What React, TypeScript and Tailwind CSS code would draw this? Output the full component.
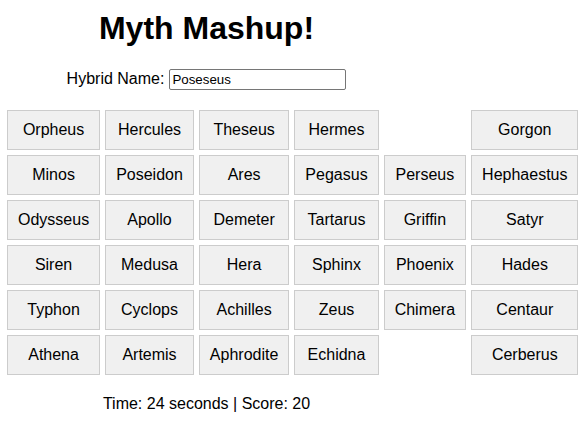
const grid: (string | null)[][] = [
  ["Orpheus", "Hercules", "Theseus", "Hermes", null, "Gorgon"],
  ["Minos", "Poseidon", "Ares", "Pegasus", "Perseus", "Hephaestus"],
  ["Odysseus", "Apollo", "Demeter", "Tartarus", "Griffin", "Satyr"],
  ["Siren", "Medusa", "Hera", "Sphinx", "Phoenix", "Hades"],
  ["Typhon", "Cyclops", "Achilles", "Zeus", "Chimera", "Centaur"],
  ["Athena", "Artemis", "Aphrodite", "Echidna", null, "Cerberus"],
];

export default function App() {
  return (
    <div className="min-h-[448px] bg-white text-black font-['Liberation_Sans',Arial,sans-serif]">
      <div className="w-[413px] pt-[10px] text-center">
        <h1 className="text-[32px] leading-[37px] font-bold">Myth Mashup!</h1>

        <div className="mt-[22px] flex items-start justify-center">
          <label htmlFor="hybrid" className="mt-[1px] text-[16px] leading-[18px]">
            Hybrid Name:
          </label>
          <input
            id="hybrid"
            type="text"
            defaultValue="Poseseus"
            className="ml-[5px] h-[21px] w-[177px] rounded-[2px] border border-[#767676] px-[2px] text-[13.33px] leading-[15px] outline-none"
          />
        </div>
      </div>

      <div className="mt-[20px] ml-[7px] grid w-max grid-cols-[repeat(6,auto)] gap-[5px]">
        {grid.flat().map((name, i) =>
          name ? (
            <button
              key={i}
              className="border border-[#cccccc] bg-[#f0f0f0] px-[10px] py-[10px] text-center text-[16px] leading-[18px]"
            >
              {name}
            </button>
          ) : (
            <div key={i} />
          )
        )}
      </div>

      <p className="mt-[20px] w-[413px] text-center text-[16px] leading-[18px]">
        Time: 24 seconds | Score: 20
      </p>
    </div>
  );
}
